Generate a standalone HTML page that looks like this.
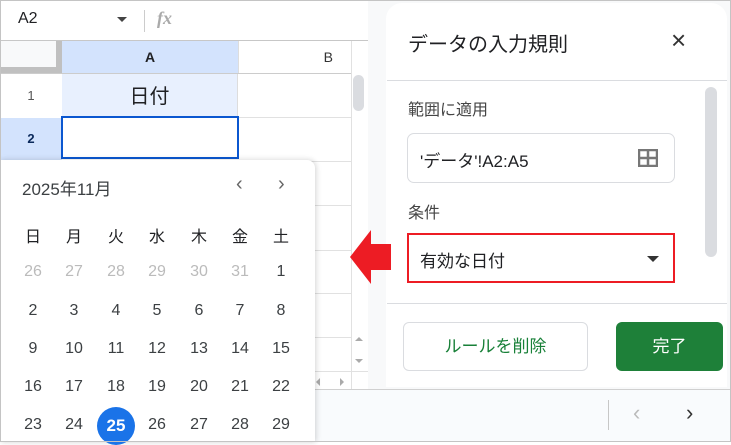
<!DOCTYPE html><html><head><meta charset="utf-8"><style>
*{margin:0;padding:0;box-sizing:border-box}
body{width:731px;height:442px;overflow:hidden;position:relative;background:#fff;font-family:"Liberation Sans","Noto Sans CJK JP",sans-serif;color:#202124}
.a{position:absolute}
.hl{position:absolute;height:1px;background:#e1e1e1}
.vl{position:absolute;width:1px;background:#e1e1e1}
.d{position:absolute;width:40px;text-align:center;font-size:16px;color:#3c4043}
</style></head><body>
<div class="a" style="left:0;top:0;width:731px;height:442px;border:1px solid #c4c4c4;z-index:50;pointer-events:none"></div>
<div class="a" style="left:18px;top:10px;font-size:16px">A2</div>
<div class="a" style="left:117px;top:17px;border-left:5px solid transparent;border-right:5px solid transparent;border-top:5px solid #444"></div>
<div class="a" style="left:144px;top:10px;width:1px;height:22px;background:#ccc"></div>
<div class="a" style="left:157px;top:8px;font-size:18px;font-style:italic;font-weight:bold;color:#aaa;font-family:'Liberation Serif',serif">fx</div>
<div class="hl" style="left:0;top:40px;width:368px;background:#c7c7c7"></div>
<div class="a" style="left:0;top:41px;width:62px;height:32px;background:#f8f9fa"></div>
<div class="a" style="left:56px;top:41px;width:6px;height:32px;background:#c0c0c0"></div>
<div class="a" style="left:0;top:67px;width:56px;height:6px;background:#c0c0c0"></div>
<div class="a" style="left:62px;top:41px;width:176px;height:32px;background:#d3e3fd;text-align:center;font-size:14px;font-weight:bold;line-height:32px">A</div>
<div class="a" style="left:238px;top:41px;width:114px;height:32px;border-left:1px solid #ddd;font-size:14px;line-height:32px;text-align:right;padding-right:19px;color:#333">B</div>
<div class="hl" style="left:0;top:73px;width:352px;background:#ccc"></div>
<div class="a" style="left:0;top:74px;width:62px;height:43px;text-align:center;line-height:43px;font-size:13px;color:#555">1</div>
<div class="a" style="left:62px;top:74px;width:176px;height:43px;background:#e8f0fe;text-align:center;line-height:46px;font-size:20px;border-right:1px solid #ddd">日付</div>
<div class="a" style="left:0;top:118px;width:62px;height:42px;background:#d3e3fd;text-align:center;line-height:42px;font-size:13px;font-weight:bold;color:#0b2a5c">2</div>
<div class="hl" style="left:62px;top:117px;width:290px"></div>
<div class="a" style="left:61px;top:116px;width:178px;height:43px;border:2px solid #0b57d0;z-index:3"></div>
<div class="vl" style="left:351px;top:41px;height:348px"></div>
<div class="hl" style="left:238px;top:161px;width:114px"></div>
<div class="hl" style="left:238px;top:205px;width:114px"></div>
<div class="hl" style="left:238px;top:250px;width:114px"></div>
<div class="hl" style="left:238px;top:293px;width:114px"></div>
<div class="hl" style="left:238px;top:337px;width:114px"></div>
<div class="a" style="left:353px;top:75px;width:11px;height:36px;background:#dadce0;border-radius:6px"></div>
<div class="a" style="left:355px;top:337px;border-left:4px solid transparent;border-right:4px solid transparent;border-bottom:4px solid #aaa"></div>
<div class="a" style="left:355px;top:359px;border-left:4px solid transparent;border-right:4px solid transparent;border-top:4px solid #aaa"></div>
<div class="hl" style="left:315px;top:371px;width:53px"></div>
<div class="a" style="left:316px;top:378px;border-top:4px solid transparent;border-bottom:4px solid transparent;border-right:4px solid #aaa"></div>
<div class="a" style="left:340px;top:378px;border-top:4px solid transparent;border-bottom:4px solid transparent;border-left:4px solid #aaa"></div>
<div class="a" style="left:0;top:389px;width:731px;height:53px;background:#f9fbfd;border-top:1px solid #d0d0d0"></div>
<div class="a" style="left:608px;top:400px;width:1px;height:30px;background:#c7c7c7"></div>
<div class="a" style="left:633px;top:400px;font-size:22px;color:#bbb">‹</div>
<div class="a" style="left:686px;top:400px;font-size:22px;color:#333">›</div>
<div class="a" style="left:368px;top:1px;width:362px;height:388px;background:#f8f9fa"></div>
<div class="a" style="left:386px;top:3px;width:341px;height:384px;background:#fff;border-radius:16px 16px 0 0"></div>
<div class="a" style="left:408px;top:28px;font-size:20px;color:#202124">データの入力規則</div>
<div class="a" style="left:671px;top:25px;font-size:26px;color:#333">×</div>
<div class="hl" style="left:387px;top:80px;width:340px;background:#dadce0"></div>
<div class="a" style="left:408px;top:96px;font-size:16px;color:#444">範囲に適用</div>
<div class="a" style="left:407px;top:133px;width:268px;height:50px;border:1px solid #dadce0;border-radius:7px"></div>
<div class="a" style="left:420px;top:147px;font-size:17px">'データ'!A2:A5</div>
<svg class="a" style="left:638px;top:149px" width="20" height="18"><rect x="1" y="1" width="18" height="16" fill="none" stroke="#777" stroke-width="2.5"/><path d="M10 1V17M1 9H19" stroke="#777" stroke-width="2.5"/></svg>
<div class="a" style="left:705px;top:87px;width:12px;height:170px;background:#dadce0;border-radius:6px"></div>
<div class="a" style="left:408px;top:199px;font-size:16px;color:#444">条件</div>
<div class="a" style="left:407px;top:233px;width:268px;height:50px;border:2px solid #ed1c24"></div>
<div class="a" style="left:420px;top:247px;font-size:17px">有効な日付</div>
<div class="a" style="left:647px;top:256px;border-left:6px solid transparent;border-right:6px solid transparent;border-top:6px solid #333"></div>
<div class="hl" style="left:387px;top:303px;width:340px;background:#dadce0"></div>
<div class="a" style="left:403px;top:322px;width:185px;height:49px;border:1px solid #dadce0;border-radius:6px;text-align:center;line-height:47px;font-size:17px;color:#188038">ルールを削除</div>
<div class="a" style="left:616px;top:322px;width:107px;height:49px;background:#1e8039;border-radius:6px;text-align:center;line-height:49px;font-size:17px;color:#fff">完了</div>
<svg class="a" style="left:349px;top:229px;z-index:10" width="44" height="56"><polygon points="1,28 22,1 22,15 42,15 42,41 22,41 22,55" fill="#ed1c24"/></svg>
<div class="a" style="left:0;top:160px;width:315px;height:282px;background:#fff;border-radius:0 8px 0 0;box-shadow:1px 0 6px rgba(0,0,0,.18);z-index:5">
<div class="a" style="left:22px;top:15px;font-size:17px;color:#3c4043">2025年11月</div>
<div class="a" style="left:236px;top:13px;font-size:20px;color:#666">‹</div>
<div class="a" style="left:278px;top:13px;font-size:20px;color:#666">›</div>
<div class="d" style="left:13px;top:63px;color:#202124">日</div><div class="d" style="left:54px;top:63px;color:#202124">月</div><div class="d" style="left:96px;top:63px;color:#202124">火</div><div class="d" style="left:137px;top:63px;color:#202124">水</div><div class="d" style="left:179px;top:63px;color:#202124">木</div><div class="d" style="left:220px;top:63px;color:#202124">金</div><div class="d" style="left:261px;top:63px;color:#202124">土</div>
<div class="d" style="left:13px;top:103px;color:#bbb">26</div><div class="d" style="left:54px;top:103px;color:#bbb">27</div><div class="d" style="left:96px;top:103px;color:#bbb">28</div><div class="d" style="left:137px;top:103px;color:#bbb">29</div><div class="d" style="left:179px;top:103px;color:#bbb">30</div><div class="d" style="left:220px;top:103px;color:#bbb">31</div><div class="d" style="left:261px;top:103px">1</div>
<div class="d" style="left:13px;top:142px">2</div><div class="d" style="left:54px;top:142px">3</div><div class="d" style="left:96px;top:142px">4</div><div class="d" style="left:137px;top:142px">5</div><div class="d" style="left:179px;top:142px">6</div><div class="d" style="left:220px;top:142px">7</div><div class="d" style="left:261px;top:142px">8</div>
<div class="d" style="left:13px;top:180px">9</div><div class="d" style="left:54px;top:180px">10</div><div class="d" style="left:96px;top:180px">11</div><div class="d" style="left:137px;top:180px">12</div><div class="d" style="left:179px;top:180px">13</div><div class="d" style="left:220px;top:180px">14</div><div class="d" style="left:261px;top:180px">15</div>
<div class="d" style="left:13px;top:218px">16</div><div class="d" style="left:54px;top:218px">17</div><div class="d" style="left:96px;top:218px">18</div><div class="d" style="left:137px;top:218px">19</div><div class="d" style="left:179px;top:218px">20</div><div class="d" style="left:220px;top:218px">21</div><div class="d" style="left:261px;top:218px">22</div>
<div class="a" style="left:97px;top:247px;width:38px;height:38px;border-radius:50%;background:#1a73e8"></div>
<div class="d" style="left:13px;top:256px">23</div><div class="d" style="left:54px;top:256px">24</div><div class="d" style="left:96px;top:256px;color:#fff;font-weight:bold;font-size:17px">25</div><div class="d" style="left:137px;top:256px">26</div><div class="d" style="left:179px;top:256px">27</div><div class="d" style="left:220px;top:256px">28</div><div class="d" style="left:261px;top:256px">29</div>
</div>
</body></html>
